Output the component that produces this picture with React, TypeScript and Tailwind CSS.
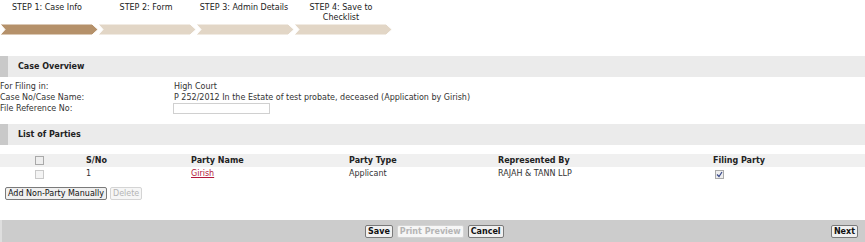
import React from 'react';

const steps = [
    { label: 'STEP 1: Case Info', x: 47 },
    { label: 'STEP 2: Form', x: 146 },
    { label: 'STEP 3: Admin Details', x: 244 },
    { label: 'STEP 4: Save to Checklist', x: 341 },
];

function Chevrons() {
    // four step arrows, first one is the active step
    const seg = (i: number) => {
        const x = i * 98;
        return `${x},0 ${x + 92},0 ${x + 98},5.5 ${x + 92},11 ${x},11 ${x + 5},5.5`;
    };
    return (
        <svg width="400" height="11" viewBox="0 0 400 11">
            {[0, 1, 2, 3].map((i) => (
                <polygon key={i} points={seg(i)} fill={i === 0 ? '#b5916a' : '#e2d6c6'} stroke="#fff" strokeWidth="1" />
            ))}
        </svg>
    );
}

function Box({ checked, disabled }: { checked?: boolean; disabled?: boolean }) {
    return (
        <span className={`inline-flex items-center justify-center w-[9px] h-[9px] border ${disabled ? 'border-[#c9c9c9] bg-[#f4f4f4]' : 'border-[#a9a9a9] bg-[#eeeeee]'}`}>
            {checked && (
                <svg width="7" height="7" viewBox="0 0 7 7">
                    <path d="M1 3.5 L3 5.5 L6 1" stroke="#3a4a8a" strokeWidth="1.2" fill="none" />
                </svg>
            )}
        </span>
    );
}

function SectionHeader({ title }: { title: string }) {
    return (
        <div className="flex h-[21px] bg-[#ebebeb]">
            <div className="w-[8px] bg-[#c9c9c9]" />
            <div className="pl-[10px] flex items-center font-bold text-[#222]">{title}</div>
        </div>
    );
}

function Btn({ children, disabled, bold }: { children: React.ReactNode; disabled?: boolean; bold?: boolean }) {
    return (
        <button
            className={`h-[13px] px-[2px] leading-[11px] border rounded-[2px] ${bold ? 'font-bold' : ''} ${disabled ? 'border-[#d4d4d4] bg-[#f6f6f6] text-[#b4b4b4]' : 'border-[#7a7a7a] bg-[#f0f0f0] text-[#111]'}`}
        >
            {children}
        </button>
    );
}

export default function App() {
    return (
        <div className="w-[865px] h-[242px] bg-white text-[8px] text-[#333] flex flex-col" style={{ fontFamily: '"DejaVu Sans", Verdana, sans-serif' }}>
            {/* step wizard */}
            <div className="relative h-[24px]">
                {steps.map((s) => (
                    <div key={s.label} className="absolute top-[3px] w-[90px] -translate-x-1/2 text-center leading-[10px] text-[#222]" style={{ left: s.x }}>
                        {s.label}
                    </div>
                ))}
            </div>
            <Chevrons />

            <div className="mt-[21px]">
                <SectionHeader title="Case Overview" />
            </div>
            <div className="grid grid-cols-[174px_1fr] mt-[4px] leading-[11px]">
                <div>For Filing in:</div>
                <div>High Court</div>
                <div>Case No/Case Name:</div>
                <div>P 252/2012 In the Estate of test probate, deceased (Application by Girish)</div>
                <div>File Reference No:</div>
                <div>
                    <input className="-ml-[1px] w-[97px] h-[11px] border border-[#d0d0d0] bg-white" />
                </div>
            </div>

            <div className="mt-[10px]">
                <SectionHeader title="List of Parties" />
            </div>

            <div className="mt-[9px]">
                <div className="grid grid-cols-[86px_105px_158px_149px_215px_1fr] h-[13px] items-center bg-[#f0f0f0] font-bold text-[#222]">
                    <div className="pl-[35px] flex"><Box /></div>
                    <div>S/No</div>
                    <div>Party Name</div>
                    <div>Party Type</div>
                    <div>Represented By</div>
                    <div>Filing Party</div>
                </div>
                <div className="grid grid-cols-[86px_105px_158px_149px_215px_1fr] h-[14px] items-center">
                    <div className="pl-[35px] flex"><Box disabled /></div>
                    <div>1</div>
                    <div><a className="text-[#b3183c] underline">Girish</a></div>
                    <div>Applicant</div>
                    <div>RAJAH &amp; TANN LLP</div>
                    <div className="pl-[2px] flex"><Box checked /></div>
                </div>
            </div>

            <div className="flex gap-[3px] pl-[5px] mt-[6px]">
                <Btn>Add Non-Party Manually</Btn>
                <Btn disabled>Delete</Btn>
            </div>

            <div className="mt-auto h-[22px] bg-[#cccccc] flex items-center border-l-2 border-[#dedede]">
                <div className="flex gap-[4px] ml-[363px]">
                    <Btn bold>Save</Btn>
                    <Btn bold disabled>Print Preview</Btn>
                    <Btn bold>Cancel</Btn>
                </div>
                <div className="ml-auto mr-[7px]">
                    <Btn bold>Next</Btn>
                </div>
            </div>
        </div>
    );
}
